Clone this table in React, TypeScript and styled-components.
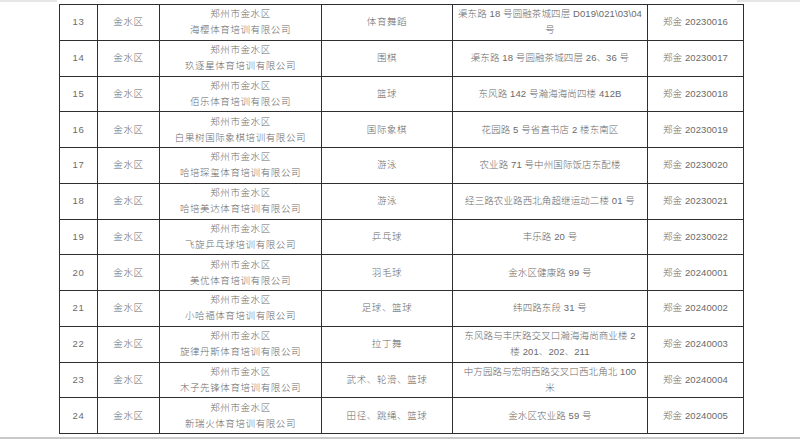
import styled, { createGlobalStyle } from "styled-components";

interface Org {
  no: number;
  company: string;
  sport: string;
  address: string[];
  code: string;
}

const orgs: Org[] = [
  { no: 13, company: "海樱体育培训有限公司", sport: "体育舞蹈", address: ["渠东路 18 号圆融茶城四层 D019\\021\\03\\04", "号"], code: "20230016" },
  { no: 14, company: "玖逐星体育培训有限公司", sport: "围棋", address: ["渠东路 18 号圆融茶城四层 26、36 号"], code: "20230017" },
  { no: 15, company: "佰乐体育培训有限公司", sport: "篮球", address: ["东风路 142 号瀚海海尚四楼 412B"], code: "20230018" },
  { no: 16, company: "白果树国际象棋培训有限公司", sport: "国际象棋", address: ["花园路 5 号省直书店 2 楼东南区"], code: "20230019" },
  { no: 17, company: "哈培琛玺体育培训有限公司", sport: "游泳", address: ["农业路 71 号中州国际饭店东配楼"], code: "20230020" },
  { no: 18, company: "哈培美达体育培训有限公司", sport: "游泳", address: ["经三路农业路西北角超继运动二楼 01 号"], code: "20230021" },
  { no: 19, company: "飞旋乒乓球培训有限公司", sport: "乒乓球", address: ["丰乐路 20 号"], code: "20230022" },
  { no: 20, company: "美优体育培训有限公司", sport: "羽毛球", address: ["金水区健康路 99 号"], code: "20240001" },
  { no: 21, company: "小哈福体育培训有限公司", sport: "足球、篮球", address: ["纬四路东段 31 号"], code: "20240002" },
  { no: 22, company: "旋律丹斯体育培训有限公司", sport: "拉丁舞", address: ["东风路与丰庆路交叉口瀚海海尚商业楼 2", "楼 201、202、211"], code: "20240003" },
  { no: 23, company: "木子先锋体育培训有限公司", sport: "武术、轮滑、篮球", address: ["中方园路与宏明西路交叉口西北角北 100", "米"], code: "20240004" },
  { no: 24, company: "新瑞火体育培训有限公司", sport: "田径、跳绳、篮球", address: ["金水区农业路 59 号"], code: "20240005" },
];

const GlobalStyle = createGlobalStyle`
  html, body {
    margin: 0;
    padding: 0;
    background: #ffffff;
  }
  body {
    width: 800px;
    height: 440px;
    overflow: hidden;
    font-family: "Liberation Sans", "Noto Sans CJK SC", sans-serif;
  }
`;

export default function App() {
  return (
    <>
      <GlobalStyle />
      <Page>
        <TopEdge>
          <EdgeLeft />
          <EdgeRight />
        </TopEdge>
        <Sheet>
          {orgs.map((o) => (
            <Row key={o.no}>
              <Cell>{o.no}</Cell>
              <Cell>金水区</Cell>
              <Cell>
                <Line>郑州市金水区</Line>
                <Line>{o.company}</Line>
              </Cell>
              <Cell>{o.sport}</Cell>
              <Cell $tight>
                {o.address.map((l, i) => (
                  <Line key={i}>{l}</Line>
                ))}
              </Cell>
              <Cell $tight>郑金 {o.code}</Cell>
            </Row>
          ))}
        </Sheet>
        <BottomEdge />
      </Page>
    </>
  );
}

const Page = styled.div`
  display: flex;
  flex-direction: column;
  width: 800px;
  height: 440px;
`;

const TopEdge = styled.div`
  display: flex;
  justify-content: space-between;
  height: 4px;
`;

const EdgeLeft = styled.div`
  width: 57px;
  height: 2px;
  background: #e6e6e6;
`;

const EdgeRight = styled.div`
  width: 63px;
  height: 2px;
  background: #e6e6e6;
`;

const Sheet = styled.div`
  display: grid;
  grid-template-columns: 38px 62px 162px 131px 195px 96px;
  grid-auto-rows: 35.75px;
  width: 684px;
  margin-left: 59px;
  border-top: 1px solid #2e2e2e;
  border-left: 1px solid #2e2e2e;
  color: #6a6a6a;
  font-size: 9.5px;
  font-weight: 300;
  letter-spacing: 0.6px;
`;

const Row = styled.div`
  display: contents;
`;

const Cell = styled.div<{ $tight?: boolean }>`
  display: flex;
  flex-direction: column;
  align-items: center;
  justify-content: center;
  text-align: center;
  padding: 0 2px;
  border-right: 1px solid #2e2e2e;
  border-bottom: 1px solid #2e2e2e;
  line-height: 16px;
  letter-spacing: ${({ $tight }) => ($tight ? "0.1px" : "inherit")};
  white-space: nowrap;
`;

const Line = styled.span`
  display: block;
`;

const BottomEdge = styled.div`
  margin-top: 3px;
  height: 2px;
  background: #c9c9c9;
`;
